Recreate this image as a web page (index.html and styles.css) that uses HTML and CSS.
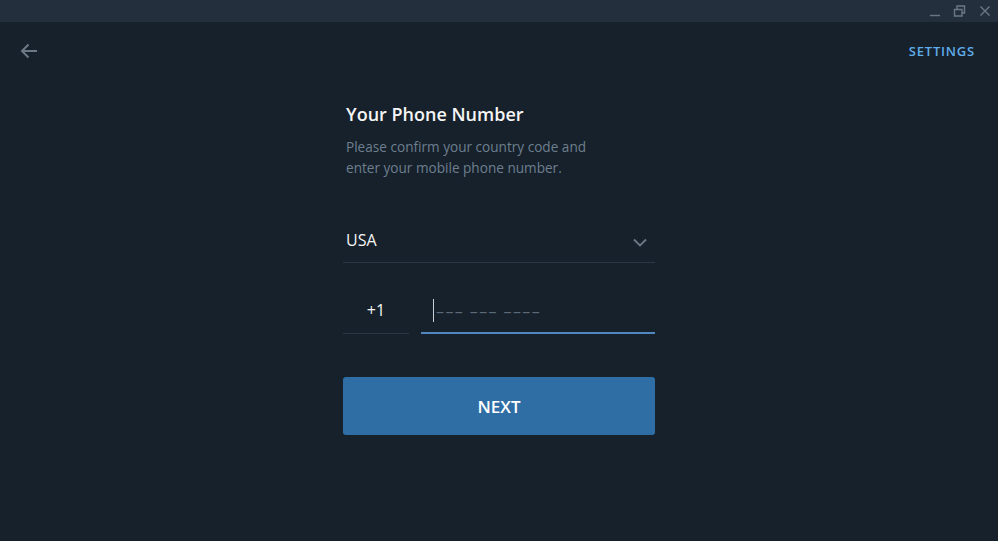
FILE: index.html
```html
<!DOCTYPE html>
<html lang="en">
<head>
    <meta charset="UTF-8">
    <meta name="viewport" content="width=device-width, initial-scale=1.0">
    <title>Telegram</title>
    <link rel="stylesheet" href="styles.css">
</head>
<body>
    <div class="titlebar">
        <span class="win-btn">
            <svg width="12" height="12" viewBox="0 0 12 12"><path d="M1 10.5h10" stroke="currentColor" stroke-width="1.4"/></svg>
        </span>
        <span class="win-btn">
            <svg width="13" height="12" viewBox="0 0 13 12"><path d="M1.5 4.5h7.5v6.5h-7.5z M4 4.5v-3.5h7.5v7h-2.5" fill="none" stroke="currentColor" stroke-width="1.4"/></svg>
        </span>
        <span class="win-btn">
            <svg width="12" height="12" viewBox="0 0 12 12"><path d="M1.5 1.5l9 9M10.5 1.5l-9 9" stroke="currentColor" stroke-width="1.4"/></svg>
        </span>
    </div>

    <header class="topbar">
        <button class="back-btn">
            <svg width="18" height="16" viewBox="0 0 18 16"><path d="M17 8H2M8.5 1.5L2 8l6.5 6.5" fill="none" stroke="currentColor" stroke-width="2"/></svg>
        </button>
        <a class="settings-link" href="#">Settings</a>
    </header>

    <main class="intro">
        <h2 class="intro-title">Your Phone Number</h2>
        <p class="intro-desc">Please confirm your country code and<br>enter your mobile phone number.</p>

        <div class="country-field">
            <span class="country-name">USA</span>
            <svg class="chevron" width="14" height="9" viewBox="0 0 14 9"><path d="M1 1.5l6 6 6-6" fill="none" stroke="currentColor" stroke-width="1.8"/></svg>
        </div>

        <div class="phone-row">
            <div class="code-field">+1</div>
            <div class="phone-field">
                <span class="caret"></span>
                <span class="placeholder">––– ––– ––––</span>
            </div>
        </div>

        <button class="next-btn">NEXT</button>
    </main>
</body>
</html>
```

FILE: styles.css
```css
body {
    margin: 0;
    padding: 0;
    background: #17212b;
    font-family: "Open Sans", "DejaVu Sans", sans-serif;
    color: #f5f5f5;
    height: 541px;
    overflow: hidden;
}

.titlebar {
    height: 22px;
    background: #242f3d;
    display: flex;
    justify-content: flex-end;
    align-items: center;
    padding-right: 7px;
    gap: 12px;
    color: #6a7886;
}

.win-btn {
    display: flex;
    width: 13px;
    height: 12px;
    align-items: center;
    justify-content: center;
}

.topbar {
    height: 58px;
    display: flex;
    align-items: center;
    justify-content: space-between;
    padding: 0 23px 0 20px;
}

.back-btn {
    background: none;
    border: none;
    padding: 0;
    color: #6c7883;
    display: flex;
}

.settings-link {
    color: #5fadea;
    font-size: 13px;
    font-weight: 600;
    text-transform: uppercase;
    letter-spacing: 0.8px;
    text-decoration: none;
}

.intro {
    width: 312px;
    margin: 22px auto 0;
}

.intro-title {
    margin: 0 0 10px 3px;
    font-size: 18px;
    font-weight: 600;
    line-height: 24px;
    color: #f5f5f5;
}

.intro-desc {
    margin: 0 0 52px 3px;
    font-size: 13.6px;
    line-height: 21px;
    color: #6d7f8f;
}

.country-field {
    display: flex;
    align-items: center;
    justify-content: space-between;
    padding: 0 8px 12px 3px;
    border-bottom: 1px solid #2b3744;
    font-size: 16px;
    line-height: 20px;
}

.chevron {
    color: #6c7883;
    margin-top: 4px;
}

.phone-row {
    display: flex;
    gap: 12px;
    margin-top: 36px;
    align-items: flex-end;
}

.code-field {
    width: 66px;
    text-align: center;
    font-size: 16px;
    line-height: 20px;
    padding-bottom: 13px;
    border-bottom: 1px solid #2b3744;
}

.phone-field {
    flex: 1;
    display: flex;
    align-items: center;
    padding: 0 0 10px 12px;
    border-bottom: 2px solid #5288c1;
    height: 23px;
}

.caret {
    width: 1px;
    height: 23px;
    background: #c8cfd6;
    margin-right: 2px;
}

.placeholder {
    color: #5a6a79;
    font-size: 16px;
    letter-spacing: 1.4px;
}

.next-btn {
    display: block;
    width: 312px;
    height: 58px;
    margin-top: 43px;
    background: #2f6ea5;
    border: none;
    border-radius: 3px;
    color: #ffffff;
    font-family: "Open Sans", "DejaVu Sans", sans-serif;
    font-size: 17px;
    font-weight: 600;
    padding-top: 2px;
}
```
